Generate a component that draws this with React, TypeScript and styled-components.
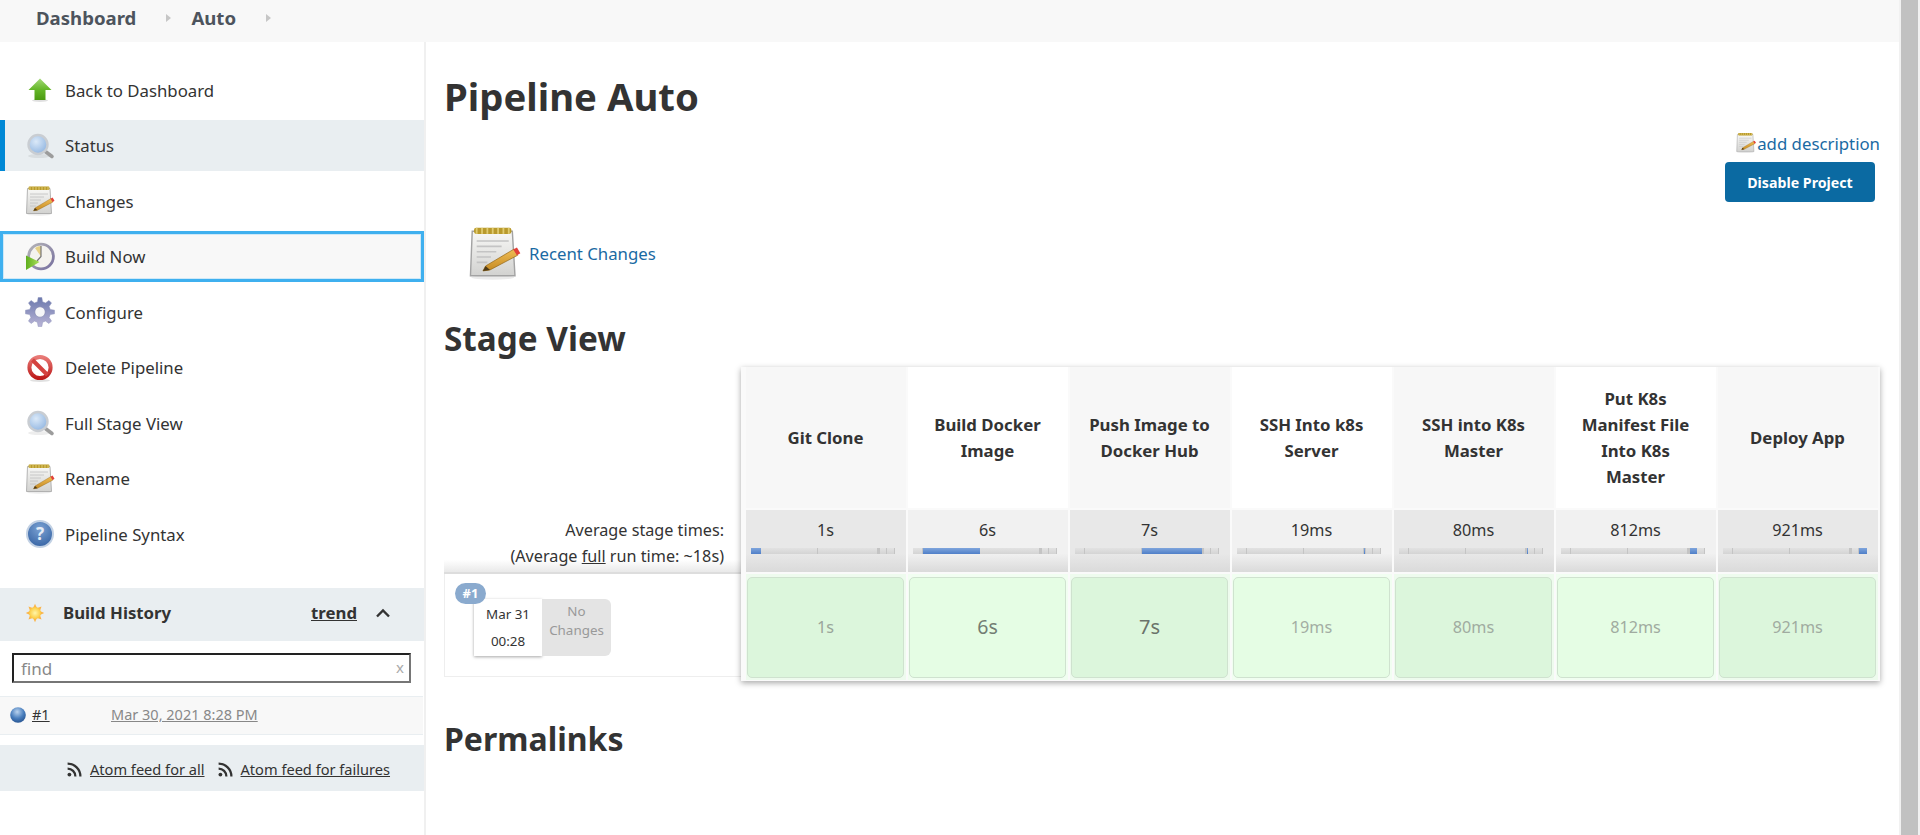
import styled, { createGlobalStyle } from 'styled-components'

const GlobalStyle = createGlobalStyle`
  html, body {
    margin: 0;
    padding: 0;
    height: 835px;
    overflow: hidden;
    background: #fff;
    font-family: "Noto Sans", "Liberation Sans", sans-serif;
    color: #333;
  }
`

type Stage = {
  title: string
  avg: string
  duration: string
  size: number
  tone: string
}

const STAGES: Stage[] = [
  { title: 'Git Clone', avg: '1s', duration: '1s', size: 16.2, tone: '#9aa59a' },
  { title: 'Build Docker Image', avg: '6s', duration: '6s', size: 19.5, tone: '#737d73' },
  { title: 'Push Image to Docker Hub', avg: '7s', duration: '7s', size: 20, tone: '#6a736a' },
  { title: 'SSH Into k8s Server', avg: '19ms', duration: '19ms', size: 16.2, tone: '#a3ada3' },
  { title: 'SSH into K8s Master', avg: '80ms', duration: '80ms', size: 16.2, tone: '#a0aba0' },
  { title: 'Put K8s Manifest File Into K8s Master', avg: '812ms', duration: '812ms', size: 16.2, tone: '#a0aba0' },
  { title: 'Deploy App', avg: '921ms', duration: '921ms', size: 16.2, tone: '#a0aba0' },
]

// share of the 144px bar each stage takes up
const BAR_WIDTHS = [10, 57, 60, 1, 1, 7, 8]

const NAV_ITEMS = [
  { label: 'Back to Dashboard', icon: 'arrow' },
  { label: 'Status', icon: 'search', state: 'current' },
  { label: 'Changes', icon: 'notepad' },
  { label: 'Build Now', icon: 'clock', state: 'focused' },
  { label: 'Configure', icon: 'gear' },
  { label: 'Delete Pipeline', icon: 'stop' },
  { label: 'Full Stage View', icon: 'search' },
  { label: 'Rename', icon: 'notepad' },
  { label: 'Pipeline Syntax', icon: 'help' },
]

const gearPath = (): string => {
  const cx = 16
  const cy = 16
  const teeth = 8
  const points: string[] = []
  for (let i = 0; i < teeth; i++) {
    const a = (i / teeth) * Math.PI * 2 - Math.PI / 2
    const step = Math.PI / teeth
    const corners: [number, number][] = [
      [10.6, a - step * 0.62],
      [14.6, a - step * 0.32],
      [14.6, a + step * 0.32],
      [10.6, a + step * 0.62],
    ]
    corners.forEach(([r, t]) => {
      points.push(`${(cx + r * Math.cos(t)).toFixed(2)} ${(cy + r * Math.sin(t)).toFixed(2)}`)
    })
  }
  return `M${points.join('L')}Z`
}

const ArrowIcon = () => (
  <svg width="32" height="32" viewBox="0 0 32 32">
    <defs>
      <linearGradient id="arrowFill" x1="0" y1="0" x2="0" y2="1">
        <stop offset="0" stopColor="#a3d977" />
        <stop offset="0.5" stopColor="#66b82a" />
        <stop offset="1" stopColor="#4c9a12" />
      </linearGradient>
    </defs>
    <ellipse cx="16" cy="26.5" rx="8" ry="1.5" fill="#000" opacity="0.12" />
    <path d="M16 4.5 27.5 16H21.5V26H10.5V16H4.5Z" fill="url(#arrowFill)" />
  </svg>
)

const SearchIcon = () => (
  <svg width="32" height="32" viewBox="0 0 32 32">
    <defs>
      <radialGradient id="glassFill" cx="0.4" cy="0.35" r="0.7">
        <stop offset="0" stopColor="#dbe9f8" />
        <stop offset="1" stopColor="#8fb4e0" />
      </radialGradient>
    </defs>
    <ellipse cx="15" cy="26" rx="11" ry="2" fill="#000" opacity="0.07" />
    <path d="M20 20.5 28 26.5" stroke="#9c9c9c" strokeWidth="3.6" strokeLinecap="round" />
    <circle cx="14" cy="14.5" r="9.5" fill="url(#glassFill)" stroke="#c9cdd2" strokeWidth="2.4" />
  </svg>
)

const NotepadIcon = ({ size = 32 }: { size?: number }) => (
  <svg width={size} height={size} viewBox="0 0 32 32">
    <defs>
      <linearGradient id="paperFill" x1="0" y1="0" x2="0" y2="1">
        <stop offset="0" stopColor="#f8f8f6" />
        <stop offset="1" stopColor="#d2d2d0" />
      </linearGradient>
      <linearGradient id="pencilFill" x1="0" y1="0" x2="0" y2="1">
        <stop offset="0" stopColor="#f0bd55" />
        <stop offset="1" stopColor="#c58a22" />
      </linearGradient>
    </defs>
    <ellipse cx="15" cy="29.5" rx="12" ry="1.2" fill="#000" opacity="0.08" />
    <path d="M3.5 3.5H26L27.5 28.5H2.5Z" fill="url(#paperFill)" stroke="#a3a3a3" strokeWidth="0.8" />
    <rect x="4.5" y="1.6" width="21" height="3.4" rx="1.2" fill="#b99a2c" />
    {[6, 9, 12, 15, 18, 21, 24].map((x) => (
      <rect key={x} x={x - 0.5} y="1.6" width="1" height="3.4" fill="#e0cb70" />
    ))}
    <path d="M6 9H24M6 12H20M6 15H17M6 18H14M6 21H12" stroke="#c4c4c4" strokeWidth="0.9" />
    <path d="M11 23 27 13.5 29 17 13.5 25.2 9.5 25.8Z" fill="url(#pencilFill)" stroke="#94681a" strokeWidth="0.4" />
    <path d="M26.5 13.8 28.6 12.6 30.5 15.8 28.6 17Z" fill="#e2403a" />
    <path d="M9.5 25.8 11 23 13.5 25.2Z" fill="#4e3a16" />
  </svg>
)

const ClockIcon = () => (
  <svg width="32" height="32" viewBox="0 0 32 32">
    <defs>
      <linearGradient id="clockRing" x1="0" y1="0" x2="1" y2="1">
        <stop offset="0" stopColor="#b5b5b8" />
        <stop offset="1" stopColor="#77709f" />
      </linearGradient>
      <linearGradient id="playFill" x1="0" y1="0" x2="1" y2="0">
        <stop offset="0" stopColor="#5fae1e" />
        <stop offset="1" stopColor="#a9e05a" />
      </linearGradient>
    </defs>
    <circle cx="17" cy="15.5" r="12.4" fill="#f4f3ee" stroke="url(#clockRing)" strokeWidth="2.8" />
    <path d="M17 15.5 17 5 A10.5 10.5 0 0 0 11 7Z" fill="#e6d184" />
    <path d="M17 5V15.5L13 20" fill="none" stroke="#777" strokeWidth="1.2" />
    <path d="M2 14.5 15.5 21 2 29Z" fill="url(#playFill)" />
  </svg>
)

const GearIcon = () => (
  <svg width="32" height="32" viewBox="0 0 32 32">
    <defs>
      <linearGradient id="gearFill" x1="0" y1="0" x2="0" y2="1">
        <stop offset="0" stopColor="#6b78ad" />
        <stop offset="1" stopColor="#b9b4d6" />
      </linearGradient>
    </defs>
    <path d={gearPath()} fill="url(#gearFill)" stroke="#8d92ba" strokeWidth="0.5" />
    <circle cx="16" cy="16" r="5.2" fill="#f6f6f8" stroke="#7f84ad" strokeWidth="0.6" />
  </svg>
)

const StopIcon = () => (
  <svg width="32" height="32" viewBox="0 0 32 32">
    <defs>
      <linearGradient id="stopFill" x1="0" y1="0" x2="0" y2="1">
        <stop offset="0" stopColor="#e87a76" />
        <stop offset="1" stopColor="#bd1a1a" />
      </linearGradient>
    </defs>
    <ellipse cx="16" cy="28.5" rx="10" ry="1.4" fill="#000" opacity="0.12" />
    <circle cx="16" cy="15.5" r="10.6" fill="#fff" stroke="url(#stopFill)" strokeWidth="4" />
    <path d="M8.5 8 23.5 23" stroke="#d4423f" strokeWidth="4" />
  </svg>
)

const HelpIcon = () => (
  <svg width="32" height="32" viewBox="0 0 32 32">
    <defs>
      <radialGradient id="helpFill" cx="0.5" cy="0.3" r="0.8">
        <stop offset="0" stopColor="#7ba2d3" />
        <stop offset="1" stopColor="#2e5c9e" />
      </radialGradient>
    </defs>
    <circle cx="16" cy="16" r="13" fill="url(#helpFill)" stroke="#c2d1e4" strokeWidth="2" />
    <text x="16" y="22" textAnchor="middle" fontFamily="Noto Sans" fontWeight="700" fontSize="17" fill="#e4ecf6">
      ?
    </text>
  </svg>
)

const SunIcon = () => (
  <svg width="20" height="20" viewBox="0 0 20 20">
    <defs>
      <radialGradient id="sunFill">
        <stop offset="0" stopColor="#fff6a8" />
        <stop offset="1" stopColor="#fbc93e" />
      </radialGradient>
    </defs>
    {[0, 45, 90, 135, 180, 225, 270, 315].map((angle) => (
      <path key={angle} d="M10 0.8 12 5H8Z" fill="#fbb44a" transform={`rotate(${angle} 10 10)`} />
    ))}
    <circle cx="10" cy="10" r="6" fill="url(#sunFill)" />
  </svg>
)

const BallIcon = () => (
  <svg width="18" height="18" viewBox="0 0 18 18">
    <defs>
      <radialGradient id="ballFill" cx="0.45" cy="0.3" r="0.75">
        <stop offset="0" stopColor="#b9d2ee" />
        <stop offset="0.55" stopColor="#4a7fbe" />
        <stop offset="1" stopColor="#234f8c" />
      </radialGradient>
    </defs>
    <circle cx="9" cy="9" r="7.8" fill="url(#ballFill)" />
  </svg>
)

const FeedIcon = () => (
  <svg width="15" height="15" viewBox="0 0 15 15">
    <circle cx="2.4" cy="12.6" r="1.9" fill="#333" />
    <path d="M.6 6.6A7.8 7.8 0 0 1 8.4 14.4M.6 1.6A12.8 12.8 0 0 1 13.4 14.4" fill="none" stroke="#333" strokeWidth="2.2" />
  </svg>
)

const navIcon = (name: string) => {
  if (name === 'arrow') return <ArrowIcon />
  if (name === 'search') return <SearchIcon />
  if (name === 'notepad') return <NotepadIcon />
  if (name === 'clock') return <ClockIcon />
  if (name === 'gear') return <GearIcon />
  if (name === 'stop') return <StopIcon />
  return <HelpIcon />
}

const App = (): React.ReactElement => {
  return (
    <Page>
      <GlobalStyle />
      <Window>
        <Breadcrumbs>
          <Crumb>Dashboard</Crumb>
          <CrumbArrow />
          <Crumb>Auto</Crumb>
          <CrumbArrow />
        </Breadcrumbs>
        <Body>
          <Sidebar>
            <Tasks>
              {NAV_ITEMS.map((item) => (
                <Task key={item.label} $state={item.state}>
                  {navIcon(item.icon)}
                  <span>{item.label}</span>
                </Task>
              ))}
            </Tasks>

            <HistoryHeader>
              <SunSlot>
                <SunIcon />
              </SunSlot>
              <HistoryTitle>Build History</HistoryTitle>
              <TrendLink>trend</TrendLink>
              <svg width="16" height="10" viewBox="0 0 16 10">
                <path d="M2 8.5 8 2.5 14 8.5" fill="none" stroke="#333" strokeWidth="2.4" />
              </svg>
            </HistoryHeader>

            <SearchWrap>
              <SearchInput defaultValue="find" />
              <SearchClear>x</SearchClear>
            </SearchWrap>

            <BuildRow>
              <BallIcon />
              <BuildNumber>#1</BuildNumber>
              <BuildDate>Mar 30, 2021 8:28 PM</BuildDate>
            </BuildRow>

            <FeedBar>
              <FeedIcon />
              <FeedLink>Atom feed for all</FeedLink>
              <FeedIcon />
              <FeedLink>Atom feed for failures</FeedLink>
            </FeedBar>
          </Sidebar>

          <Main>
            <PageTitle>Pipeline Auto</PageTitle>
            <DescriptionRow>
              <NotepadIcon size={22} />
              <BlueLink>add description</BlueLink>
            </DescriptionRow>
            <ActionRow>
              <DisableButton>Disable Project</DisableButton>
            </ActionRow>
            <RecentChanges>
              <NotepadIcon size={57} />
              <BlueLink>Recent Changes</BlueLink>
            </RecentChanges>
            <StageTitle>Stage View</StageTitle>

            <StageView>
              <BuildsColumn>
                <AverageLabel>
                  <div>Average stage times:</div>
                  <div>
                    (Average <u>full</u> run time: ~18s)
                  </div>
                </AverageLabel>
                <BuildCard>
                  <BuildBadge>#1</BuildBadge>
                  <DateBox>
                    <span>Mar 31</span>
                    <span>00:28</span>
                  </DateBox>
                  <NoChanges>No Changes</NoChanges>
                </BuildCard>
              </BuildsColumn>

              <StageTable>
                {STAGES.map((stage, i) => (
                  <StageHead key={stage.title} $odd={i % 2 === 0}>
                    {stage.title}
                  </StageHead>
                ))}
                {STAGES.map((stage, i) => (
                  <AvgCell key={stage.title} $odd={i % 2 === 0}>
                    <span>{stage.avg}</span>
                    <TimeBar>
                      {BAR_WIDTHS.map((width, j) => (
                        <TimeSegment key={j} $width={width} $active={i === j} />
                      ))}
                    </TimeBar>
                  </AvgCell>
                ))}
                {STAGES.map((stage, i) => (
                  <ResultSlot key={stage.title} $odd={i % 2 === 0}>
                    <ResultCell $odd={i % 2 === 0} $size={stage.size} $tone={stage.tone}>
                      {stage.duration}
                    </ResultCell>
                  </ResultSlot>
                ))}
              </StageTable>
            </StageView>

            <PermalinksTitle>Permalinks</PermalinksTitle>
          </Main>
        </Body>
      </Window>
      <Scrollbar>
        <ScrollThumb />
      </Scrollbar>
    </Page>
  )
}

export default App

const Page = styled.div`
  display: flex;
  width: 1920px;
  height: 835px;
  overflow: hidden;
`

const Window = styled.div`
  width: 1899px;
  display: flex;
  flex-direction: column;
`

const Scrollbar = styled.div`
  width: 21px;
  padding: 0 2px;
  box-sizing: border-box;
  background: #f1f1f1;
`

const ScrollThumb = styled.div`
  height: 100%;
  background: #c1c1c1;
`

const Breadcrumbs = styled.div`
  height: 42px;
  box-sizing: border-box;
  padding: 0 0 7px 36px;
  display: flex;
  align-items: center;
  background: #f8f8f8;
`

const Crumb = styled.a`
  font-size: 18.6px;
  font-weight: 700;
  color: #4d545d;
`

const CrumbArrow = styled.i`
  width: 0;
  height: 0;
  margin: 0 20px 0 30px;
  border-left: 5px solid #c6c6c6;
  border-top: 4.5px solid transparent;
  border-bottom: 4.5px solid transparent;
`

const Body = styled.div`
  flex: 1;
  display: flex;
`

const Sidebar = styled.aside`
  width: 426px;
  box-sizing: border-box;
  flex: none;
  border-right: 2px solid #f0f0f0;
`

const Tasks = styled.nav`
  padding-top: 22.5px;
  display: flex;
  flex-direction: column;
  gap: 4.5px;
`

const Task = styled.a<{ $state?: string }>`
  height: 51px;
  box-sizing: border-box;
  padding-left: 24px;
  display: flex;
  align-items: center;
  gap: 9px;
  font-size: 16.8px;
  color: #333;
  background: ${(p) => (p.$state === 'current' ? '#e9eef1' : p.$state === 'focused' ? '#f8f8f8' : 'transparent')};
  box-shadow: ${(p) =>
    p.$state === 'current'
      ? 'inset 5px 0 0 #0088d5'
      : p.$state === 'focused'
        ? 'inset 0 0 0 3px #3fb0ef, inset 0 0 0 4px #cfe9f8'
        : 'none'};
`

const HistoryHeader = styled.div`
  margin-top: 28.75px;
  height: 53px;
  box-sizing: border-box;
  padding: 0 33px 4px 0;
  display: flex;
  align-items: center;
  background: #e9eef1;
`

const SunSlot = styled.span`
  width: 63px;
  padding-left: 25px;
  box-sizing: border-box;
  display: flex;
`

const HistoryTitle = styled.strong`
  flex: 1;
  font-size: 16.8px;
`

const TrendLink = styled.a`
  margin-right: 18px;
  font-size: 16.8px;
  font-weight: 700;
  text-decoration: underline;
`

const SearchWrap = styled.div`
  position: relative;
  padding: 12px 13px 13px 12px;
`

const SearchInput = styled.input`
  display: block;
  width: 100%;
  height: 30px;
  box-sizing: border-box;
  padding: 1px 7px 0;
  border-style: solid;
  border-width: 2px;
  border-color: #222 #767676 #767676 #222;
  outline: none;
  font-family: inherit;
  font-size: 17px;
  color: #888;
`

const SearchClear = styled.span`
  position: absolute;
  top: 17px;
  right: 20px;
  font-size: 15px;
  line-height: 18px;
  color: #aaa;
`

const BuildRow = styled.div`
  height: 39px;
  width: 423px;
  box-sizing: border-box;
  padding: 0 0 2px 9px;
  display: flex;
  align-items: center;
  background: #f8f8f8;
  border-top: 1px solid #e9eef1;
  border-bottom: 1px solid #e9eef1;
  font-size: 14.5px;
`

const BuildNumber = styled.a`
  margin: 0 0 2px 5px;
  width: 79px;
  color: #333;
  text-decoration: underline;
`

const BuildDate = styled.a`
  margin-bottom: 2px;
  color: #888;
  text-decoration: underline;
`

const FeedBar = styled.div`
  margin-top: 10px;
  height: 46px;
  padding: 2px 0 0 67px;
  box-sizing: border-box;
  display: flex;
  align-items: center;
  background: #e9eef1;
`

const FeedLink = styled.a`
  margin: 0 13px 0 8px;
  font-size: 14.6px;
  color: #333;
  text-decoration: underline;
`

const Main = styled.main`
  flex: 1;
  min-width: 0;
  padding: 30px 0 0 18px;
`

const PageTitle = styled.h1`
  margin: 0;
  height: 50px;
  font-size: 38.3px;
  line-height: 48px;
  font-weight: 700;
  color: #333;
`

const DescriptionRow = styled.div`
  margin: 10px 19px 0 0;
  height: 22px;
  display: flex;
  justify-content: flex-end;
  align-items: center;
`

const BlueLink = styled.a`
  font-size: 16.8px;
  color: #1a6aa3;
`

const ActionRow = styled.div`
  margin-top: 8px;
  padding-right: 24px;
  display: flex;
  justify-content: flex-end;
`

const DisableButton = styled.button`
  width: 150px;
  height: 40px;
  border: none;
  border-radius: 4px;
  background: #0b6aa2;
  font-family: inherit;
  font-size: 14.2px;
  font-weight: 700;
  color: #fff;
`

const RecentChanges = styled.div`
  margin: 23px 0 0 22px;
  display: flex;
  align-items: center;
  gap: 6px;
`

const StageTitle = styled.h2`
  margin: 33px 0 0;
  height: 46px;
  font-size: 33.3px;
  line-height: 46px;
  font-weight: 700;
  color: #333;
`

const StageView = styled.section`
  margin: 6px 19px 0 0;
  display: grid;
  grid-template-columns: 297px 1fr;
`

const BuildsColumn = styled.div`
  padding-top: 143px;
`

const AverageLabel = styled.div`
  height: 64px;
  box-sizing: border-box;
  padding: 7px 17px 0 0;
  text-align: right;
  font-size: 16.2px;
  line-height: 26px;
  background: linear-gradient(to bottom, #fff 80%, #e9e9e9 100%);
  border-bottom: 2px solid #ddd;
`

const BuildCard = styled.div`
  position: relative;
  height: 103px;
  box-sizing: border-box;
  padding: 25px 0 0 29px;
  display: flex;
  align-items: flex-start;
  border-left: 1px solid #eee;
  border-bottom: 1px solid #eee;
`

const BuildBadge = styled.span`
  position: absolute;
  top: 9px;
  left: 10px;
  width: 31px;
  height: 21px;
  border-radius: 11px;
  background: #8aaace;
  color: #fff;
  font-size: 13px;
  font-weight: 700;
  line-height: 21px;
  text-align: center;
`

const DateBox = styled.div`
  width: 68px;
  height: 57px;
  display: flex;
  flex-direction: column;
  align-items: center;
  justify-content: space-around;
  background: #fff;
  box-shadow: 0 1px 3px rgba(0, 0, 0, 0.35);
  font-size: 13.4px;
  padding: 1px 0;
  box-sizing: border-box;
`

const NoChanges = styled.div`
  width: 69px;
  height: 57px;
  padding: 3px 6px 0;
  box-sizing: border-box;
  border-radius: 0 6px 6px 0;
  background: #e4e4e4;
  color: #999;
  font-size: 13.4px;
  line-height: 19px;
  text-align: center;
`

const StageTable = styled.div`
  position: relative;
  height: 314px;
  box-sizing: border-box;
  padding: 0 2px 1px 4.5px;
  display: grid;
  grid-template-columns: repeat(7, 160px);
  grid-template-rows: 141px 62px 106px;
  column-gap: 2px;
  row-gap: 2px;
  background: #fafafa;
  box-shadow: 0 2px 6px rgba(0, 0, 0, 0.35);
`

const StageHead = styled.div<{ $odd: boolean }>`
  display: flex;
  align-items: center;
  justify-content: center;
  padding: 0 18px;
  text-align: center;
  font-size: 16.8px;
  font-weight: 700;
  line-height: 26px;
  color: #333;
  background: ${(p) => (p.$odd ? '#f7f7f7' : '#fff')};
`

const AvgCell = styled.div<{ $odd: boolean }>`
  padding-top: 8px;
  box-sizing: border-box;
  display: flex;
  flex-direction: column;
  align-items: center;
  gap: 6px;
  font-size: 16.2px;
  line-height: 24px;
  color: #333;
  background: linear-gradient(
    to bottom,
    ${(p) => (p.$odd ? '#e8e8e8' : '#f1f1f1')} 70%,
    #dadada 100%
  );
`

const TimeBar = styled.div`
  align-self: flex-start;
  margin-left: 5px;
  width: 144px;
  height: 6px;
  display: flex;
  background: #dfdfdf;
`

const TimeSegment = styled.div<{ $width: number; $active: boolean }>`
  flex: 0 0 ${(p) => p.$width}px;
  box-sizing: border-box;
  background: ${(p) => (p.$active ? 'linear-gradient(#7fa5dc, #4f7fc8)' : 'linear-gradient(#e2e2e2, #d4d4d4)')};
  border-right: ${(p) => (p.$active ? 'none' : '1px solid #c4c4c4')};
`

const ResultSlot = styled.div<{ $odd: boolean }>`
  padding: 3px 1.5px 2px;
  background: ${(p) => (p.$odd ? '#eefbee' : '#f1fef1')};
`

const ResultCell = styled.div<{ $odd: boolean; $size: number; $tone: string }>`
  height: 100%;
  box-sizing: border-box;
  padding-bottom: 2px;
  display: flex;
  align-items: center;
  justify-content: center;
  border: 1px solid #cfe2cf;
  border-radius: 5px;
  background: ${(p) => (p.$odd ? '#dcf6dc' : '#e5fde4')};
  font-size: ${(p) => p.$size}px;
  color: ${(p) => p.$tone};
`

const PermalinksTitle = styled(StageTitle)`
  margin-top: 36px;
  font-size: 32px;
  line-height: 44px;
`
